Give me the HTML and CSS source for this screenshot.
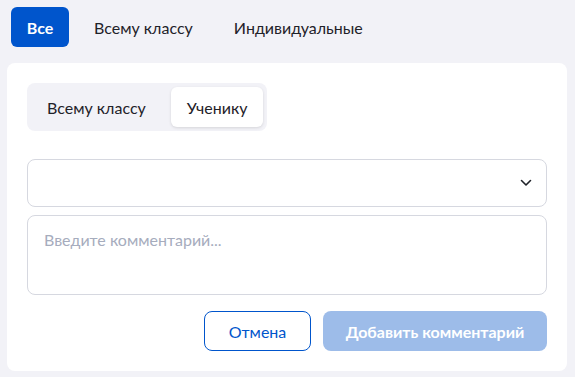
FILE: index.html
```html
<!DOCTYPE html>
<html lang="ru">
<head>
    <meta charset="UTF-8">
    <meta name="viewport" content="width=device-width, initial-scale=1.0">
    <title>Комментарии</title>
    <link rel="stylesheet" href="styles.css">
</head>
<body>
    <div class="page">
        <!-- Filter tabs -->
        <div class="tabs">
            <button class="tab active">Все</button>
            <button class="tab">Всему классу</button>
            <button class="tab">Индивидуальные</button>
        </div>

        <!-- New comment form -->
        <div class="card">
            <div class="segment">
                <button class="segment-item">Всему классу</button>
                <button class="segment-item selected">Ученику</button>
            </div>

            <div class="select">
                <span class="select-value"></span>
                <svg class="chevron" width="12" height="8" viewBox="0 0 12 8">
                    <path d="M1.5 1.5 L6 6 L10.5 1.5" fill="none" stroke="#1f2229" stroke-width="1.6" stroke-linecap="round" stroke-linejoin="round"/>
                </svg>
            </div>

            <textarea class="comment-input" placeholder="Введите комментарий..."></textarea>

            <div class="actions">
                <button class="btn btn-outline">Отмена</button>
                <button class="btn btn-primary" disabled>Добавить комментарий</button>
            </div>
        </div>
    </div>
</body>
</html>
```

FILE: styles.css
```css
* {
    box-sizing: border-box;
}

body {
    margin: 0;
    background: #f2f2f7;
    font-family: Lato, "Noto Sans", sans-serif;
    color: #1f2229;
}

button {
    font-family: inherit;
}

.page {
    padding: 7px 8px 0 7px;
}

.tabs {
    display: flex;
    gap: 9px;
    padding-left: 4px;
}

.tab {
    height: 40px;
    padding: 0 16px;
    border: none;
    border-radius: 6px;
    background: none;
    color: #1f2229;
    font-size: 16px;
    cursor: pointer;
}

.tab.active {
    width: 58px;
    padding: 0;
    background: #0055cc;
    color: white;
    font-weight: 700;
}

.card {
    margin-top: 16px;
    background: white;
    border-radius: 8px;
    padding: 20px;
    display: flex;
    flex-direction: column;
}

.segment {
    align-self: flex-start;
    display: flex;
    gap: 9px;
    padding: 4px;
    background: #f2f2f7;
    border-radius: 8px;
}

.segment-item {
    height: 40px;
    padding: 0 16px;
    border: none;
    border-radius: 6px;
    background: none;
    color: #1f2229;
    font-size: 16px;
    cursor: pointer;
}

.segment-item.selected {
    background: white;
    box-shadow: 0 1px 3px rgba(0, 0, 0, 0.12);
}

.select {
    margin-top: 28px;
    height: 48px;
    border: 1px solid #d6d8e0;
    border-radius: 8px;
    display: flex;
    align-items: center;
    justify-content: space-between;
    padding: 0 14px 0 16px;
}

.comment-input {
    margin-top: 8px;
    height: 80px;
    border: 1px solid #d6d8e0;
    border-radius: 8px;
    padding: 14px 16px;
    font-family: inherit;
    font-size: 16px;
    color: #1f2229;
    resize: none;
    outline: none;
}

.comment-input::placeholder {
    color: #a6acbd;
}

.actions {
    margin-top: 16px;
    display: flex;
    justify-content: flex-end;
    gap: 12px;
}

.btn {
    height: 40px;
    border-radius: 8px;
    font-size: 16px;
    cursor: pointer;
}

.btn-outline {
    width: 107px;
    background: white;
    border: 1px solid #0055cc;
    color: #0055cc;
}

.btn-primary {
    width: 224px;
    border: none;
    background: #9dbce9;
    color: white;
    font-weight: 700;
}
```
